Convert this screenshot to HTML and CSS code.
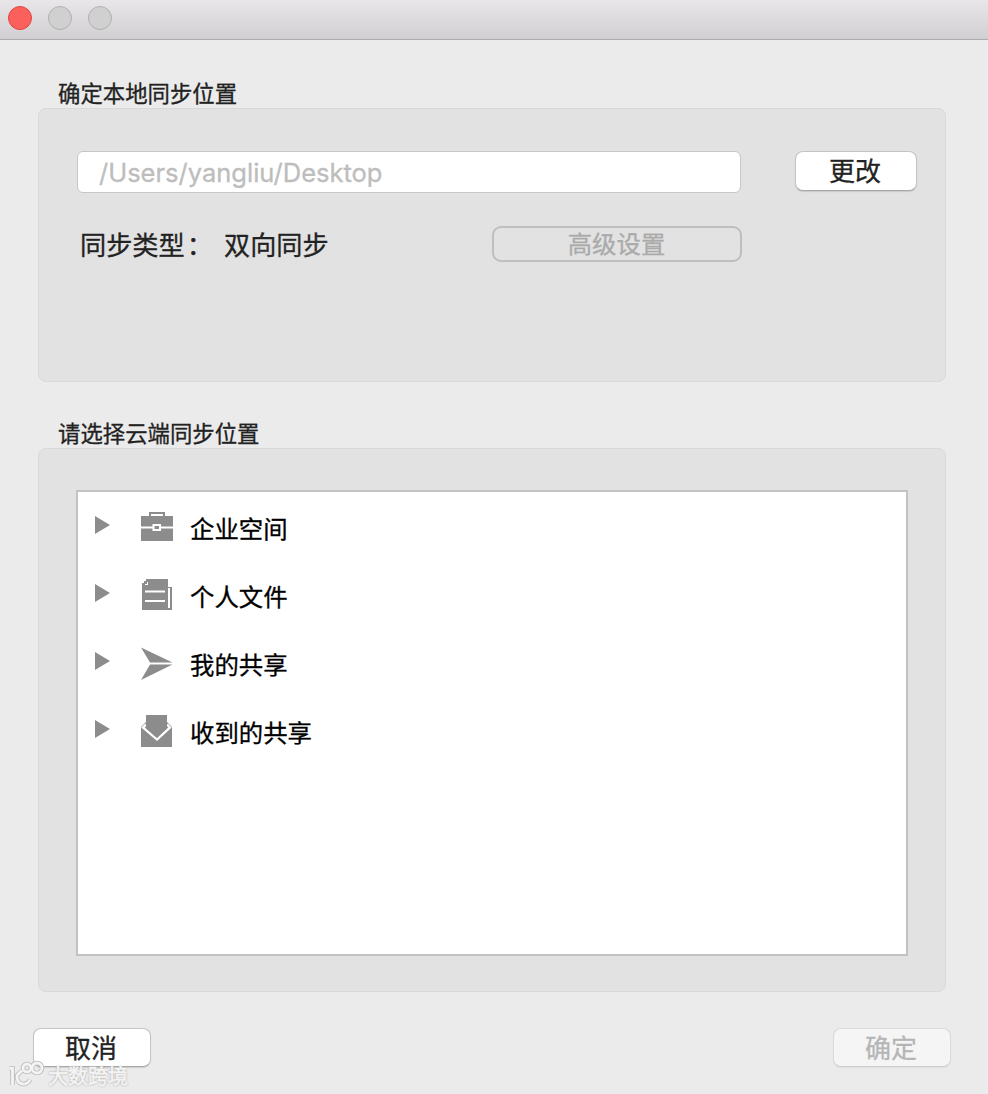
FILE: index.html
```html
<!DOCTYPE html>
<html lang="zh-CN">
<head>
    <meta charset="UTF-8">
    <meta name="viewport" content="width=device-width, initial-scale=1.0">
    <title>同步设置</title>
    <link rel="stylesheet" href="styles.css">
</head>
<body>
    <header class="titlebar">
        <span class="dot close"></span>
        <span class="dot"></span>
        <span class="dot"></span>
    </header>

    <main>
        <h2>确定本地同步位置</h2>
        <section class="panel local">
            <div class="path-row">
                <input type="text" class="path" value="/Users/yangliu/Desktop" disabled>
                <button class="btn change">更改</button>
            </div>
            <div class="type-row">
                <span class="type-label">同步类型<span class="colon">：</span></span>
                <span class="type-value">双向同步</span>
                <button class="advanced" disabled>高级设置</button>
            </div>
        </section>

        <h2>请选择云端同步位置</h2>
        <section class="panel cloud">
            <ul class="tree">
                <li>
                    <span class="arrow"></span>
                    <svg class="icon" width="34" height="34" viewBox="0 0 34 34">
                        <path d="M1 5h32v25H1z" fill="#8c8c8c"/>
                        <path d="M10 5V2h14v3" fill="none" stroke="#8c8c8c" stroke-width="2"/>
                        <path d="M1 16.500h32" stroke="#fff" stroke-width="2"/>
                        <path d="M13.500 14h6.500v5h-6.500z" fill="#8c8c8c" stroke="#fff" stroke-width="2"/>
                    </svg>
                    <span class="name">企业空间</span>
                </li>
                <li>
                    <span class="arrow"></span>
                    <svg class="icon" width="34" height="34" viewBox="0 0 34 34">
                        <path d="M8 0h20v8h4v23H2V6h6z" fill="#8c8c8c"/>
                        <path d="M2 4h2V2h2V0h3v3H7v2H5v2H2z" fill="#8c8c8c"/>
                        <path d="M5 12.500h20M5 22h20" stroke="#fff" stroke-width="2.2"/>
                        <path d="M29 9v20" stroke="#fff" stroke-width="2"/>
                    </svg>
                    <span class="name">个人文件</span>
                </li>
                <li>
                    <span class="arrow"></span>
                    <svg class="icon" width="34" height="34" viewBox="0 0 34 34">
                        <path d="M1 .5L32.500 15.500H10zM1 33L32.500 17.500H10z" fill="#8c8c8c"/>
                    </svg>
                    <span class="name">我的共享</span>
                </li>
                <li>
                    <span class="arrow"></span>
                    <svg class="icon" width="34" height="34" viewBox="0 0 34 34">
                        <path d="M6 7L1 12v20h31V12l-5-5z" fill="#8c8c8c"/>
                        <path d="M6 9.500L3 12.500 17 24.500 30 12.500 27 9.500" fill="none" stroke="#fff" stroke-width="2.4"/>
                        <path d="M6 0h21v13.500L17 23 6 13.500z" fill="#8c8c8c"/>
                    </svg>
                    <span class="name">收到的共享</span>
                </li>
            </ul>
        </section>
    </main>

    <footer>
        <button class="btn cancel">取消</button>
        <button class="btn ok" disabled>确定</button>
    </footer>

    <div class="watermark">
        <svg width="38" height="30" viewBox="0 0 38 30">
            <g class="logo-shade">
                <path d="M1.500 8.500h3V25M14 10.500l-5 5c-1 10 10 11 13 4"/>
                <circle cx="19" cy="8" r="4"/>
                <circle cx="29" cy="8" r="5"/>
            </g>
            <g class="logo-line">
                <path d="M1.500 8.500h3V25M14 10.500l-5 5c-1 10 10 11 13 4"/>
                <circle cx="19" cy="8" r="4"/>
                <circle cx="29" cy="8" r="5"/>
            </g>
        </svg>
        <span>大数跨境</span>
    </div>
</body>
</html>
```
FILE: styles.css
```css
* {
    box-sizing: border-box;
}

body {
    margin: 0;
    height: 1094px;
    overflow: hidden;
    position: relative;
    background: #ebebeb;
    color: #222;
    font-family: "Noto Sans CJK SC", sans-serif;
    -webkit-text-stroke: 0.3px;
}

button {
    font-family: inherit;
    padding: 0;
}

/* Window title bar */
.titlebar {
    display: flex;
    gap: 16px;
    height: 40px;
    padding: 6px 8px;
    background: linear-gradient(#e8e6e8, #d1cfd1);
    border-bottom: 1px solid #acacac;
}

.dot {
    width: 24px;
    height: 24px;
    border-radius: 50%;
    background: #d0d0d0;
    border: 1px solid #b0b0b0;
}

.dot.close {
    background: #fc605c;
    border-color: #de4643;
}

main {
    padding: 0 42px 0 38px;
}

h2 {
    margin: 0 0 0 20px;
    padding-top: 38px;
    height: 68px;
    font-size: 22.4px;
    font-weight: 400;
    line-height: 28px;
}

.panel {
    background: #e2e2e2;
    border: 1px solid #d9d9d9;
    border-radius: 8px;
}

/* Local folder */
.local {
    height: 274px;
    margin-bottom: -2px;
    padding: 42px 28px 0 38px;
}

.path-row {
    display: flex;
    justify-content: space-between;
}

.path {
    width: 664px;
    height: 42px;
    padding: 0 0 0 21px;
    background: #fff;
    border: 1px solid #c6c6c6;
    border-radius: 6px;
    color: #bdbdbd;
    font-family: Inter, sans-serif;
    font-size: 25.5px;
    -webkit-text-stroke: 0.3px;
}

.btn {
    padding: 0 2px 2px 0;
    background: #fff;
    border: 1px solid #c4c4c4;
    border-bottom-color: #a8a8a8;
    border-radius: 8px;
    box-shadow: 0 1px 1px rgba(0, 0, 0, 0.12);
    color: #222;
    font-size: 26px;
    line-height: 36px;
}

.change {
    width: 122px;
    height: 40px;
}

.type-row {
    display: flex;
    align-items: center;
    height: 36px;
    margin-top: 33px;
    padding-left: 3px;
    font-size: 26.2px;
    line-height: 36px;
}

.type-label {
    width: 144px;
}

.colon {
    margin-left: 2px;
}

.type-value {
    width: 268px;
}

.advanced {
    width: 250px;
    height: 36px;
    padding: 0 1px 3px 0;
    background: none;
    border: 2px solid #bfbfbf;
    border-radius: 9px;
    color: #aaa;
    font-size: 24.4px;
    line-height: 29px;
}

/* Cloud folders */
.cloud {
    height: 544px;
    padding: 41px 37px 35px;
}

.tree {
    height: 466px;
    margin: 0;
    padding: 0;
    list-style: none;
    background: #fff;
    border: 2px solid #c2c2c2;
}

.tree li {
    display: flex;
    align-items: center;
    height: 68px;
    padding-left: 17px;
    color: #000;
    font-size: 24.4px;
    line-height: 36px;
}

.arrow {
    width: 15px;
    height: 18px;
    margin-top: -2px;
    background: #8c8c8c;
    clip-path: polygon(0 0, 100% 50%, 0 100%);
}

.icon {
    margin: 3px 16px 0 30px;
}

.name {
    margin-top: 4px;
}

footer {
    display: flex;
    justify-content: space-between;
    padding: 36px 37px 0 33px;
}

.cancel,
.ok {
    width: 118px;
    height: 39px;
}

.ok {
    background: #f5f5f5;
    border-color: #dadada;
    border-bottom-color: #cecece;
    box-shadow: 0 1px 1px rgba(0, 0, 0, 0.06);
    color: #b5b5b5;
}

/* Watermark over the bottom left corner */
.watermark {
    position: absolute;
    left: 8px;
    bottom: 2px;
    display: flex;
    align-items: center;
    gap: 2px;
    height: 34px;
    color: #f4f4f4;
    font-size: 20px;
    text-shadow: 0 0 2px #999, 0 0 2px #aaa;
    -webkit-text-stroke: 0.7px #f4f4f4;
}

.watermark path,
.watermark circle {
    fill: none;
}

.logo-shade {
    stroke: #bbb;
    stroke-width: 4.5;
}

.logo-line {
    stroke: #f4f4f4;
    stroke-width: 2.8;
}
```
